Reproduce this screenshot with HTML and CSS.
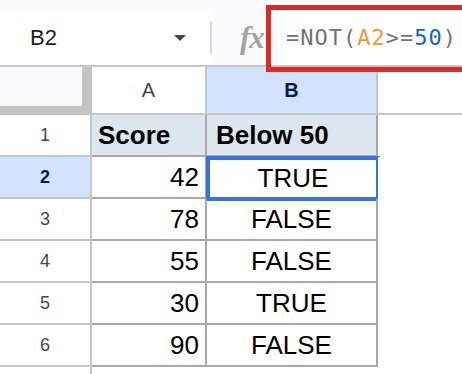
FILE: index.html
```html
<!DOCTYPE html>
<html lang="en">
<head>
    <meta charset="UTF-8">
    <title>NOT formula</title>
    <link rel="stylesheet" href="styles.css">
</head>
<body>
    <div class="toolbar">
        <div class="namebox">
            <span class="ref">B2</span>
            <span class="caret"></span>
            <span class="sep"></span>
        </div>
        <div class="fx">fx</div>
        <div class="formula"><span class="op">=NOT(</span><span class="arg">A2</span><span class="op">&gt;=</span><span class="num">50</span><span class="op">)</span></div>
    </div>
    <!-- highlight round the formula bar -->
    <div class="mark"></div>

    <div class="sheet">
        <div class="corner"><div class="corner-fill"></div></div>
        <div class="colhead">A</div>
        <div class="colhead active">B</div>
        <div class="colhead rest"></div>

        <div class="rowhead">1</div>
        <div class="cell title">Score</div>
        <div class="cell title left">Below 50</div>
        <div class="blank"></div>

        <div class="rowhead active">2</div>
        <div class="cell num">42</div>
        <div class="cell center selected">TRUE</div>
        <div class="blank"></div>

        <div class="rowhead">3</div>
        <div class="cell num">78</div>
        <div class="cell center">FALSE</div>
        <div class="blank"></div>

        <div class="rowhead">4</div>
        <div class="cell num">55</div>
        <div class="cell center">FALSE</div>
        <div class="blank"></div>

        <div class="rowhead">5</div>
        <div class="cell num">30</div>
        <div class="cell center">TRUE</div>
        <div class="blank"></div>

        <div class="rowhead">6</div>
        <div class="cell num">90</div>
        <div class="cell center">FALSE</div>
        <div class="blank"></div>

        <div class="rowhead empty"></div>
        <div class="blank"></div>
        <div class="blank"></div>
        <div class="blank"></div>
    </div>
</body>
</html>
```

FILE: styles.css
```css
body {
    margin: 0;
    font-family: 'Liberation Sans', Arial, sans-serif;
    background: #ffffff;
    color: #000000;
    width: 462px;
    height: 374px;
    overflow: hidden;
    position: relative;
}
.toolbar {
    display: flex;
    align-items: stretch;
    padding-top: 10px;
    height: 55px;
    background: #f9fbfd;
    border-bottom: 2px solid #c4c7c5;
}
.namebox {
    display: flex;
    align-items: center;
    width: 212px;
    background: #ffffff;
}
.ref {
    margin-left: 30px;
    font-size: 22px;
    color: #1f1f1f;
}
.caret {
    margin-left: auto;
    margin-right: 24px;
    width: 0;
    height: 0;
    border-left: 6px solid transparent;
    border-right: 6px solid transparent;
    border-top: 6px solid #444746;
}
.sep {
    width: 2px;
    height: 33px;
    background: #d3dde8;
}
.fx {
    margin-left: 28px;
    width: 28px;
    font-family: 'Liberation Serif', serif;
    font-style: italic;
    font-weight: bold;
    font-size: 31px;
    line-height: 55px;
    color: #a4a4a4;
    letter-spacing: -1px;
}
.formula {
    flex: 1;
    margin-left: 10px;
    padding-left: 8px;
    background: #ffffff;
    font-family: 'DejaVu Sans Mono', monospace;
    font-size: 22px;
    letter-spacing: 1px;
    line-height: 55px;
    white-space: nowrap;
}
.op { color: #737373; }
.arg { color: #f09a36; }
.num { color: #1a5fc7; }
.mark {
    position: absolute;
    top: 5px;
    left: 266px;
    width: 191px;
    height: 57px;
    border: 5px solid #d92a2a;
}
.sheet {
    display: grid;
    grid-template-columns: 92px 115px 171px 1fr;
    grid-template-rows: 48px repeat(6, 42px) 1fr;
    height: 307px;
}
.corner {
    background: #c4c4c4;
    padding: 0 9px 9px 0;
    border-right: 1px solid #c4c4c4;
}
.corner-fill {
    height: 100%;
    background: #f8f9fa;
}
.colhead {
    display: flex;
    align-items: center;
    justify-content: center;
    font-size: 20px;
    color: #444746;
    border-right: 2px solid #c4c7c5;
    border-bottom: 2px solid #c4c7c5;
}
.colhead.active {
    background: #d3e3fd;
    color: #041e49;
    font-weight: bold;
}
.colhead.rest {
    border-right: none;
}
.rowhead {
    display: flex;
    align-items: center;
    justify-content: center;
    font-size: 18px;
    color: #444746;
    border-right: 2px solid #c4c7c5;
    border-bottom: 2px solid #c4c7c5;
}
.rowhead.active {
    background: #d3e3fd;
    color: #041e49;
    font-weight: bold;
}
.rowhead.empty {
    border-bottom: none;
}
.cell {
    display: flex;
    align-items: center;
    font-size: 26px;
    padding: 0 6px;
    border-right: 2px solid #a8a8a8;
    border-bottom: 2px solid #a8a8a8;
}
.cell.num {
    justify-content: flex-end;
    color: #000000;
}
.cell.center {
    justify-content: center;
}
.cell.title {
    background: #dde6ef;
    font-weight: bold;
}
.cell.left {
    padding-left: 9px;
}
.cell.selected {
    margin: -1px -2px -2px -1px;
    border: none;
    box-shadow: inset 0 0 0 4px #3574e3;
}
.blank {
    background: #ffffff;
}
```
